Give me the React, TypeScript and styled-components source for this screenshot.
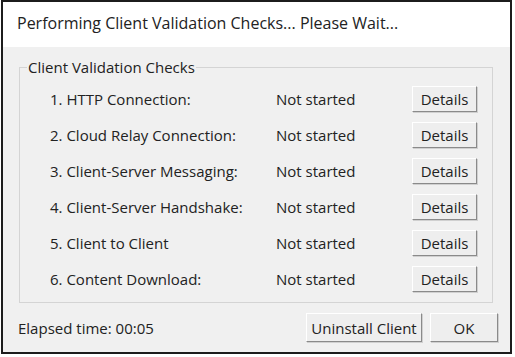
import React from 'react';
import styled, { createGlobalStyle } from 'styled-components';

const GlobalStyle = createGlobalStyle`
  html, body {
    margin: 0;
    padding: 0;
    background: #ffffff;
  }
  body {
    font-family: 'Open Sans', 'Noto Sans', 'Liberation Sans', sans-serif;
    color: #222;
  }
`;

const Window = styled.div`
  display: flex;
  flex-direction: column;
  width: 511px;
  height: 354px;
  margin-left: 1px;
  border: 2px solid #1c1c1c;
  box-sizing: border-box;
  background: #f0f0f0;
`;

const TitleBar = styled.div`
  display: flex;
  align-items: center;
  height: 45px;
  padding: 0 0 4px 14px;
  box-sizing: border-box;
  background: #ffffff;
  font-size: 16px;
  color: #222;
`;

const Body = styled.div`
  display: flex;
  flex-direction: column;
  flex: 1;
  padding: 10px 17px 0 16px;
`;

const GroupBox = styled.fieldset`
  margin: 0;
  padding: 9px 15px 10px 30px;
  border: 1px solid #d4d4d4;
  border-radius: 0;
`;

const Legend = styled.legend`
  padding: 0 1px;
  margin-left: -23px;
  font-size: 15px;
  line-height: 20px;
  color: #222;
`;

const Rows = styled.div`
  display: grid;
  grid-template-columns: 226px 1fr 65px;
  grid-auto-rows: 26px;
  row-gap: 10px;
  align-items: center;
`;

const Label = styled.span`
  font-size: 15px;
`;

const Status = styled.span`
  font-size: 15px;
`;

const Button = styled.button<{ $w: number; $h?: number }>`
  width: ${(p) => p.$w}px;
  height: ${(p) => p.$h ?? 26}px;
  padding: 0;
  background: #eeeeee;
  border: 1px solid;
  border-color: #ffffff #8a8a8a #8a8a8a #ffffff;
  box-shadow: 1px 1px 0 #d0d0d0;
  font-family: inherit;
  font-size: 15px;
  color: #222;
`;

const Footer = styled.div`
  display: flex;
  align-items: center;
  margin: 10px -5px 0 -1px;
  gap: 8px;
`;

const Elapsed = styled.span`
  flex: 1;
  font-size: 15px;
`;

const checks = [
  '1. HTTP Connection:',
  '2. Cloud Relay Connection:',
  '3. Client-Server Messaging:',
  '4. Client-Server Handshake:',
  '5. Client to Client',
  '6. Content Download:',
];

export default function App() {
  return (
    <>
      <GlobalStyle />
      <Window>
        <TitleBar>Performing Client Validation Checks... Please Wait...</TitleBar>
        <Body>
          <GroupBox>
            <Legend>Client Validation Checks</Legend>
            <Rows>
              {checks.map((c) => (
                <React.Fragment key={c}>
                  <Label>{c}</Label>
                  <Status>Not started</Status>
                  <Button $w={65}>Details</Button>
                </React.Fragment>
              ))}
            </Rows>
          </GroupBox>
          <Footer>
            <Elapsed>Elapsed time: 00:05</Elapsed>
            <Button $w={116} $h={29}>Uninstall Client</Button>
            <Button $w={68} $h={29}>OK</Button>
          </Footer>
        </Body>
      </Window>
    </>
  );
}
